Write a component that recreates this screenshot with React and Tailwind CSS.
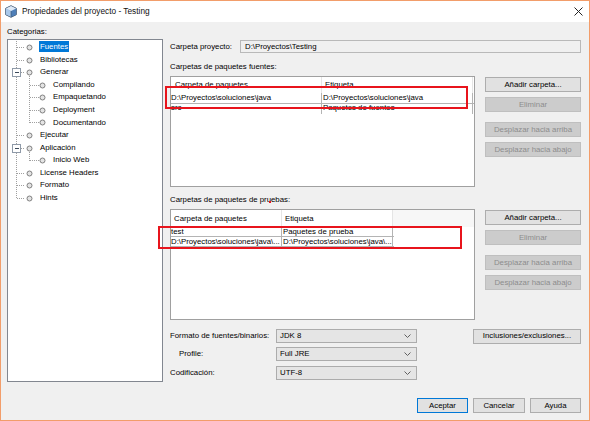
import React from "react";

const F = "font-['Liberation_Sans',Arial,sans-serif]";

function Btn({ children, disabled, primary, className = "" }) {
  const base = "h-[15px] flex items-center justify-center leading-none border ";
  const style = disabled
    ? "bg-[#cccccc] border-[#bfbfbf] text-[#8c8c8c]"
    : primary
    ? "bg-[#e1e1e1] border-[#0078d7] text-black"
    : "bg-[#e1e1e1] border-[#adadad] text-black";
  return <div className={base + style + " " + className}>{children}</div>;
}

function Combo({ value }) {
  return (
    <div className="w-[141px] h-[14px] border border-[#acacac] bg-[#e5e5e5] flex items-center pl-[3px] pr-[5px]">
      <span className="flex-1 leading-none">{value}</span>
      <svg width="7" height="4" viewBox="0 0 7 4">
        <path d="M0.5 0.5 L3.5 3.5 L6.5 0.5" fill="none" stroke="#606060" strokeWidth="1" />
      </svg>
    </div>
  );
}

const treeRows = [
  { t: "Fuentes", l: 0, sel: true },
  { t: "Bibliotecas", l: 0 },
  { t: "Generar", l: 0 },
  { t: "Compilando", l: 1 },
  { t: "Empaquetando", l: 1 },
  { t: "Deployment", l: 1 },
  { t: "Documentando", l: 1 },
  { t: "Ejecutar", l: 0 },
  { t: "Aplicación", l: 0 },
  { t: "Inicio Web", l: 1 },
  { t: "License Headers", l: 0 },
  { t: "Formato", l: 0 },
  { t: "Hints", l: 0 },
];

function TreeLines() {
  const c = (i) => Math.round(7 + 12.58 * i) + 0.5;
  const dash = { stroke: "#a0a0a0", strokeDasharray: "1 1", strokeWidth: 1 };
  return (
    <svg className="absolute left-0 top-0" width="154" height="180" shapeRendering="crispEdges">
      <line x1="8.5" y1="1" x2="8.5" y2={c(12)} {...dash} />
      <line x1="21.5" y1={c(2) + 3} x2="21.5" y2={c(6)} {...dash} />
      <line x1="21.5" y1={c(8) + 3} x2="21.5" y2={c(9)} {...dash} />
      {treeRows.map((r, i) =>
        r.l === 0 ? (
          <line key={"h" + i} x1="9" y1={c(i)} x2="17" y2={c(i)} {...dash} />
        ) : (
          <line key={"h" + i} x1="22" y1={c(i)} x2="31" y2={c(i)} {...dash} />
        )
      )}
      {[2, 8].map((i) => (
        <g key={"m" + i}>
          <rect x="4.5" y={c(i) - 4} width="8" height="8" fill="#ffffff" stroke="#8f9aa8" />
          <line x1="6.5" y1={c(i)} x2="11" y2={c(i)} stroke="#3c4a5a" />
        </g>
      ))}
      {treeRows.map((r, i) => (
        <circle
          key={"c" + i}
          cx={r.l === 0 ? 21.5 : 34.5}
          cy={c(i)}
          r="2.5"
          fill="#e4e4e4"
          stroke="#808080"
          strokeWidth="1"
          shapeRendering="auto"
        />
      ))}
    </svg>
  );
}

function Table1() {
  return (
    <div className="w-[305px] h-[111px] border border-[#a0a0a0] bg-white flex flex-col">
      <div className="h-[16px] flex items-center">
        <div className="w-[151px] h-full flex items-center pl-[4px] border-r border-[#e5e5e5]">Carpeta de paquetes</div>
        <div className="w-[151px] h-full flex items-center pl-[3px] border-r border-[#e5e5e5]">Etiqueta</div>
      </div>
      <div className="h-[11px] flex border-b border-[#b4b4b4] w-[303px]">
        <div className="w-[151px] flex items-center border-r border-[#b4b4b4] leading-none">D:\Proyectos\soluciones\java</div>
        <div className="w-[151px] flex items-center border-r border-[#b4b4b4] leading-none pl-[1px]">D:\Proyectos\soluciones\java</div>
      </div>
      <div className="h-[10px] flex w-[303px] overflow-hidden">
        <div className="w-[151px] border-r border-[#b4b4b4] leading-[9px] -mt-[1px] h-[11px]">src</div>
        <div className="w-[151px] border-r border-[#b4b4b4] leading-[9px] -mt-[1px] h-[11px] pl-[1px]">Paquetes de fuentes</div>
      </div>
    </div>
  );
}

function Table2() {
  return (
    <div className="w-[305px] h-[111px] border border-[#a0a0a0] bg-white flex flex-col">
      <div className="h-[17px] flex items-center">
        <div className="w-[111px] h-full flex items-center pl-[3px] border-r border-[#e5e5e5]">Carpeta de paquetes</div>
        <div className="w-[111px] h-full flex items-center pl-[3px] border-r border-[#e5e5e5]">Etiqueta</div>
        <div className="flex-1 h-full bg-[#f7f7f7]" />
      </div>
      <div className="h-[10px] flex border-b border-[#b4b4b4] w-[223px]">
        <div className="w-[111px] flex items-center border-r border-[#b4b4b4] leading-none">test</div>
        <div className="w-[111px] flex items-center border-r border-[#b4b4b4] leading-none pl-[1px]">Paquetes de prueba</div>
      </div>
      <div className="h-[10px] flex border-b border-[#b4b4b4] w-[223px]">
        <div className="w-[111px] flex items-center border-r border-[#b4b4b4] leading-none whitespace-nowrap overflow-hidden">D:\Proyectos\soluciones\java\...</div>
        <div className="w-[111px] flex items-center border-r border-[#b4b4b4] leading-none pl-[1px] whitespace-nowrap overflow-hidden">D:\Proyectos\soluciones\java\...</div>
      </div>
    </div>
  );
}

function ButtonCol() {
  return (
    <div className="w-[96px] flex flex-col">
      <Btn className="mt-[1px]">Añadir carpeta...</Btn>
      <Btn disabled className="mt-[5px]">Eliminar</Btn>
      <Btn disabled className="mt-[10px]">Desplazar hacia arriba</Btn>
      <Btn disabled className="mt-[5px]">Desplazar hacia abajo</Btn>
    </div>
  );
}

export default function App() {
  return (
    <div className={`${F} relative w-[590px] h-[421px] border border-[#f29d6a] bg-[#f0f0f0] flex flex-col text-[7.8px] text-black overflow-hidden`}>
      {/* title bar */}
      <div className="h-[21px] bg-white flex items-center pl-[4px] pr-[6px]">
        <svg width="12" height="13" viewBox="0 0 12 13">
          <path d="M6 0.7 L11.3 3.3 L11.3 9.7 L6 12.3 L0.7 9.7 L0.7 3.3 Z" fill="#5b8fc9" stroke="#3a4f66" strokeWidth="0.9" />
          <path d="M0.9 3.4 L6 6 L6 12.1 L0.9 9.6 Z" fill="#a9c8ea" />
          <path d="M6 6 L11.1 3.4 L11.1 9.6 L6 12.1 Z" fill="#4f7fb8" />
          <path d="M0.9 3.4 L6 0.9 L11.1 3.4 L6 6 Z" fill="#dfe9f5" />
          <path d="M6 6 L6 12" stroke="#3a4f66" strokeWidth="0.6" />
        </svg>
        <span className="ml-[5px] text-[8.3px] text-[#111]">Propiedades del proyecto - Testing</span>
        <div className="flex-1" />
        <svg width="9" height="9" viewBox="0 0 9 9">
          <path d="M0.5 0.5 L8.5 8.5 M8.5 0.5 L0.5 8.5" stroke="#222" strokeWidth="1" />
        </svg>
      </div>

      {/* body */}
      <div className="flex flex-1">
        {/* left */}
        <div className="w-[169px] pl-[6px] flex flex-col">
          <div className="mt-[5px] h-[10px] leading-[10px]">Categorias:</div>
          <div className="mt-[2px] w-[156px] h-[343px] border border-[#828790] bg-white relative">
            <TreeLines />
            <div className="relative pt-[0.7px]">
              {treeRows.map((r) => (
                <div key={r.t} className={`h-[12.58px] flex items-center ${r.l === 0 ? "pl-[31px]" : "pl-[44px]"}`}>
                  <span className={`h-[11px] px-[1px] flex items-center leading-none ${r.sel ? "bg-[#0078d7] text-white" : ""}`}>{r.t}</span>
                </div>
              ))}
            </div>
          </div>
        </div>

        {/* right */}
        <div className="w-[411px] flex flex-col">
          <div className="mt-[18px] h-[13px] flex items-center">
            <div className="w-[70px] leading-none">Carpeta proyecto:</div>
            <div className="w-[341px] h-[13px] border border-[#b9b9b9] bg-[#f0f0f0] flex items-center pl-[4px] leading-none">D:\Proyectos\Testing</div>
          </div>

          <div className="mt-[9px] h-[10px] leading-[10px]">Carpetas de paquetes fuentes:</div>
          <div className="mt-[4px] flex gap-[10px]">
            <Table1 />
            <ButtonCol />
          </div>

          <div className="mt-[8px] h-[10px] leading-[10px]">Carpetas de paquetes de pruebas:</div>
          <div className="mt-[4px] flex gap-[10px]">
            <Table2 />
            <ButtonCol />
          </div>

          <div className="mt-[9px] flex items-center h-[14px]">
            <div className="w-[106px] leading-none">Formato de fuentes/binarios:</div>
            <Combo value="JDK 8" />
            <div className="flex-1" />
            <Btn className="w-[108px] h-[14px]">Inclusiones/exclusiones...</Btn>
          </div>
          <div className="mt-[4px] flex items-center h-[14px]">
            <div className="w-[106px] pl-[9px] leading-none">Profile:</div>
            <Combo value="Full JRE" />
          </div>
          <div className="mt-[5px] flex items-center h-[14px]">
            <div className="w-[106px] leading-none">Codificación:</div>
            <Combo value="UTF-8" />
          </div>

          <div className="mt-[18px] flex justify-end gap-[5px]">
            <Btn primary className="w-[51px]">Aceptar</Btn>
            <Btn className="w-[52px]">Cancelar</Btn>
            <Btn className="w-[51px]">Ayuda</Btn>
          </div>
        </div>
      </div>

      {/* annotation overlays */}
      <div className="absolute left-[164px] top-[85px] w-[303px] h-[23px] border-2 border-[#e8141c] pointer-events-none" />
      <div className="absolute left-[157px] top-[225px] w-[304px] h-[23px] border-2 border-[#e8141c] pointer-events-none" />
      <div className="absolute left-[268px] top-[200px] w-[2px] h-[2px] bg-[#e8141c] pointer-events-none" />
    </div>
  );
}
